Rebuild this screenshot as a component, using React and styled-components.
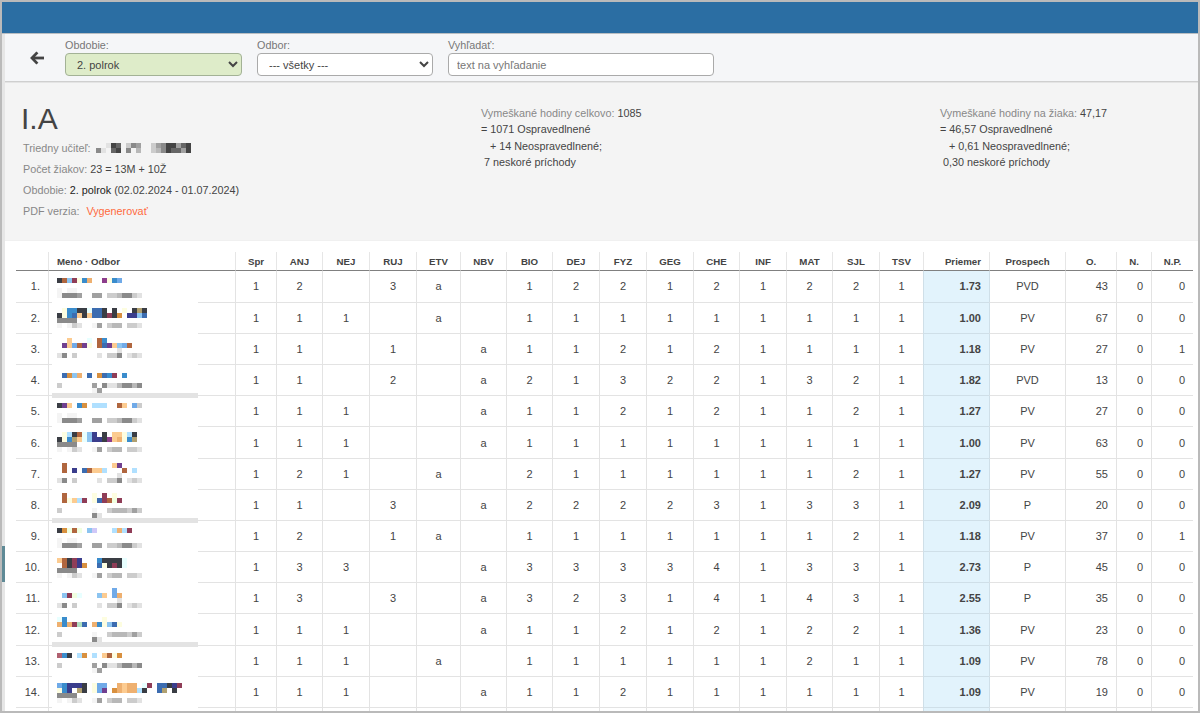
import React from "react";
import styled, { createGlobalStyle } from "styled-components";

const GlobalStyle = createGlobalStyle`
  html, body {
    margin: 0;
    padding: 0;
    background: #fff;
  }
  body {
    font-family: "Liberation Sans", Arial, sans-serif;
    font-size: 11px;
    color: #444;
  }
`;

const Frame = styled.div`
  width: 1200px;
  height: 713px;
  box-sizing: border-box;
  border: 2px solid #bababa;
  overflow: hidden;
  display: flex;
  flex-direction: column;
  background: #fff;
`;

const TopBar = styled.div`
  height: 32px;
  flex: none;
  box-sizing: border-box;
  background: #2b6ea3;
  border-bottom: 1px solid #b9bec2;
`;

const Body = styled.div`
  flex: 1;
  min-height: 0;
  display: flex;
`;

const Rail = styled.div`
  width: 3px;
  flex: none;
  background: #e6e6e6;
`;

const RailThumb = styled.div`
  margin-top: 512px;
  height: 36px;
  background: #5f8a96;
`;

const Main = styled.div`
  flex: 1;
  min-width: 0;
  display: flex;
  flex-direction: column;
`;

const Toolbar = styled.div`
  height: 47px;
  flex: none;
  display: flex;
  align-items: flex-start;
  gap: 15px;
  padding-left: 60px;
  position: relative;
  background: #f5f6f8;
  border-bottom: 1px solid #cfcfcf;
  box-shadow: 0 1px 0 #e4e4e4;
`;

const BackButton = styled.a`
  position: absolute;
  left: 25px;
  top: 17px;
  color: #444;
  line-height: 0;
`;

const Field = styled.label`
  display: flex;
  flex-direction: column;
  gap: 2px;
  padding-top: 5px;
  width: ${(props) => props.$width}px;
`;

const FieldLabel = styled.span`
  font-size: 10.8px;
  line-height: 12px;
  color: #777;
`;

const Select = styled.select`
  height: 23px;
  width: 100%;
  box-sizing: border-box;
  padding: 0 0 0 7px;
  font-family: "Liberation Sans", Arial, sans-serif;
  font-size: 11px;
  color: #444;
  border: 1px solid ${(props) => (props.$active ? "#a3b296" : "#aaa")};
  border-radius: 4px;
  background-color: ${(props) => (props.$active ? "#deecc9" : "#fff")};
`;

const SearchInput = styled.input`
  height: 23px;
  width: 100%;
  box-sizing: border-box;
  padding: 0 8px;
  font-family: "Liberation Sans", Arial, sans-serif;
  font-size: 11px;
  color: #444;
  border: 1px solid #aaa;
  border-radius: 4px;
  background: #fff;

  &::placeholder {
    color: #777;
    opacity: 1;
  }
`;

const Info = styled.section`
  height: 158px;
  flex: none;
  box-sizing: border-box;
  padding: 23px 0 0 18px;
  display: grid;
  grid-template-columns: 458px 459px 1fr;
  background: #f4f4f4;
  font-size: 10.8px;
`;

const ClassName = styled.h1`
  margin: 0 0 0 -2px;
  font-size: 30px;
  font-weight: 400;
  line-height: 28px;
  color: #444;
`;

const ClassMeta = styled.div`
  margin-top: 4px;
`;

const MetaRow = styled.div`
  display: flex;
  align-items: center;
  height: 21.2px;
  color: #888;
`;

const MetaValue = styled.span`
  color: #444;
  margin-left: 3px;
`;

const MetaStrong = styled.span`
  color: #222;
`;

const PdfLink = styled.a`
  color: #ff6a3d;
  margin-left: 7px;
`;

const Summary = styled.div`
  line-height: 16.3px;
  color: #444;
`;

const SummaryLabel = styled.span`
  color: #888;
`;

const TablePanel = styled.div`
  flex: 1;
  min-height: 0;
  padding: 11px 0 0 11px;
  background: #fff;
  border-top: 1px solid #f0f0f0;
  overflow: hidden;
`;

const Grades = styled.table`
  table-layout: fixed;
  width: 1177px;
  border-collapse: separate;
  border-spacing: 0;
`;

const Head = styled.th`
  height: 18px;
  padding: 0 8px;
  box-sizing: content-box;
  font-size: 9.7px;
  font-weight: 700;
  color: #444;
  overflow: hidden;
  white-space: nowrap;
  text-align: ${(props) => props.$align || "center"};
  border-bottom: 1px solid #808080;
  border-left: ${(props) => (props.$first ? "none" : "1px solid #e6e6e6")};
`;

const Row = styled.tr`
  height: ${(props) => (props.$first ? 31.87 : 31.17)}px;
`;

const Cell = styled.td`
  padding: 0 8px;
  color: #444;
  white-space: nowrap;
  text-align: ${(props) => props.$align || "center"};
  border-bottom: 1px solid #e3e3e3;
  border-left: ${(props) => (props.$first ? "none" : "1px solid #e3e3e3")};
`;

const AverageCell = styled(Cell)`
  background: #e2f3fc;
  font-weight: 700;
  border-bottom-color: #cfdfe8;
  border-left-color: #cfdfe8;
`;

const ResultCell = styled(Cell)`
  border-left-color: #cfdfe8;
`;

const NameCell = styled(Cell)`
  position: relative;
`;

const NameCover = styled.div`
  position: absolute;
  left: 3px;
  top: 0;
  bottom: -1px;
  width: 146px;
  padding-left: 5px;
  box-sizing: border-box;
  background: #fff;
`;

const NameRule = styled.div`
  position: absolute;
  z-index: 1;
  left: 0;
  right: 0;
  top: 28px;
  height: 5px;
  background: #e3e3e3;
`;

const MosaicSvg = styled.svg`
  display: block;
  margin-top: ${(props) => props.$top || 0}px;
`;

const TeacherMosaic = styled(MosaicSvg)`
  margin-left: 5px;
`;

const palette = {
  d: "#3a3d44", b: "#b0663f", s: "#8cc4f0", r: "#8f3d57", y: "#fdfde0",
  u: "#3a8ccc", o: "#eeb070", p: "#8c3d8c", l: "#70aae8", n: "#3a3d8c",
  k: "#3c6cb0", m: "#d8903f", q: "#fccb90", c: "#b0e0ff", i: "#e8ffff",
  v: "#704090", g: "#f0ffe0", t: "#b0a070", h: "#b0e0c0", w: "#d0c8f8",
  x: "#b06070",
  1: "#f4f4f4", 2: "#e2e2e2", 3: "#cccccc", 4: "#b8b8b8", 5: "#a0a0a0",
  6: "#8a8a8a", 7: "#666666", 8: "#444444",
};

// pixelated (anonymised) names, one string per 5px line
const Mosaic = ({ lines, top, as: Svg = MosaicSvg }) => {
  const width = Math.max(...lines.map((l) => l.length)) * 5;
  return (
    <Svg $top={top} width={width} height={lines.length * 5} shapeRendering="crispEdges">
      {lines.map((line, y) =>
        line.split("").map((ch, x) =>
          ch === "." ? null : (
            <rect key={`${x}-${y}`} x={x * 5} y={y * 5} width="5" height="5" fill={palette[ch]} />
          )
        )
      )}
    </Svg>
  );
};

const BackArrow = () => (
  <svg width="14" height="14" viewBox="0 0 14 14" fill="none" stroke="currentColor" strokeWidth="2.8">
    <path d="M7.4 1.4 L2 7 L7.4 12.6" />
    <path d="M2.4 7 H14" />
  </svg>
);

const odborA = ["", "1.11", "16665..55.3346632"];
const odborB = ["6666", "1.132..15.344.332"];
const odborC = ["............2", "26.3....2.336.232"];
const odborD = ["", "3......5.62246646", ".......15"];
const odborE = ["", "3......1..3444353", ".......62"];

const students = [
  { top: 7, name: ["dbsryuo..pyul", ...odborA], marks: "1 2 _ 3 a _ 1 2 2 1 2 1 2 2 1", avg: "1.73", res: "PVD", o: 43, n: 0, np: 0 },
  { top: 5, name: [".yuuddikkd.d.y.dtd", "dyukqdqkkdrdm.nnsk", ...odborB], marks: "1 1 1 _ a _ 1 1 1 1 1 1 1 1 1", avg: "1.00", res: "PV", o: 67, n: 0, np: 0 },
  { top: 4, name: ["..q...i.bu", ".vqlbvy.bkvqslb", ...odborC], marks: "1 1 _ 1 _ a 1 1 2 1 2 1 1 1 1", avg: "1.18", res: "PV", o: 27, n: 0, np: 1 },
  { top: 8, rule: true, name: [".kmso.k.mkur.u", ...odborD], marks: "1 1 _ 2 _ a 2 1 3 2 2 1 3 2 1", avg: "1.82", res: "PVD", o: 13, n: 0, np: 0 },
  { top: 7, name: ["dvq.um.ccc..bq.l3", ...odborA], marks: "1 1 1 _ _ a 1 1 2 1 2 1 1 2 1", avg: "1.27", res: "PV", o: 27, n: 0, np: 0 },
  { top: 5, name: [".ycdbisn.d.qqycd", "dyutqisnndpqoyut", ...odborB], marks: "1 1 1 _ _ a 1 1 1 1 1 1 1 1 1", avg: "1.00", res: "PV", o: 63, n: 0, np: 0 },
  { top: 4, name: [".b.........qv", ".b.n.kbqqc...b.c", ...odborC], marks: "1 2 1 _ a _ 2 1 1 1 1 1 1 2 1", avg: "1.27", res: "PV", o: 55, n: 0, np: 0 },
  { top: 3, rule: true, name: [".b.....y.r.y", ".byqcr.ykrbgr", ...odborE], marks: "1 1 _ 3 _ a 2 2 2 2 3 1 3 3 1", avg: "2.09", res: "P", o: 20, n: 0, np: 0 },
  { top: 7, name: ["dmgbg.sw...cocr", ...odborA], marks: "1 2 _ 1 a _ 1 1 1 1 1 1 1 2 1", avg: "1.18", res: "PV", o: 37, n: 0, np: 1 },
  { top: 6, name: ["qbdrn...uddddi", ".bdrnm..kydrdi", ...odborB], marks: "1 3 3 _ _ a 3 3 3 3 4 1 3 3 1", avg: "2.73", res: "P", o: 45, n: 0, np: 0 },
  { top: 5, name: ["...........l", ".srgi...sq.lo", ...odborC], marks: "1 3 _ 3 _ a 3 2 3 1 4 1 4 3 1", avg: "2.55", res: "P", o: 35, n: 0, np: 0 },
  { top: 3, rule: true, name: ["iu.......y", "ouorhk.ouysky", ...odborE], marks: "1 1 1 _ _ a 1 1 2 1 2 1 2 2 1", avg: "1.36", res: "PV", o: 23, n: 0, np: 0 },
  { top: 7, name: ["xud.cm.c.qbym", ...odborD], marks: "1 1 1 _ a _ 1 1 1 1 1 1 2 1 1", avg: "1.09", res: "PV", o: 78, n: 0, np: 0 },
  { top: 6, name: ["lunnnd.yll..oqoo.ir.kkdnr", "yun.td.ylv.moqoocd..kt.d", ...odborB], marks: "1 1 1 _ _ a 1 1 2 1 1 1 1 1 1", avg: "1.09", res: "PV", o: 19, n: 0, np: 0 },
];

const subjects = [
  ["Spr", 41], ["ANJ", 46], ["NEJ", 47], ["RUJ", 47], ["ETV", 44], ["NBV", 46], ["BIO", 46], ["DEJ", 47],
  ["FYZ", 47], ["GEG", 47], ["CHE", 46], ["INF", 47], ["MAT", 46], ["SJL", 47], ["TSV", 44],
];

const teacherMosaic = ["..287.365..35688578", "62178.6.4..34687758"];

const App = () => (
  <>
    <GlobalStyle />
    <Frame>
      <TopBar />
      <Body>
        <Rail>
          <RailThumb />
        </Rail>
        <Main>
          <Toolbar>
            <BackButton>
              <BackArrow />
            </BackButton>
            <Field $width={177}>
              <FieldLabel>Obdobie:</FieldLabel>
              <Select $active defaultValue="2">
                <option value="1">1. polrok</option>
                <option value="2">2. polrok</option>
              </Select>
            </Field>
            <Field $width={176}>
              <FieldLabel>Odbor:</FieldLabel>
              <Select defaultValue="all">
                <option value="all">--- všetky ---</option>
              </Select>
            </Field>
            <Field $width={266}>
              <FieldLabel>Vyhľadať:</FieldLabel>
              <SearchInput placeholder="text na vyhľadanie" />
            </Field>
          </Toolbar>

          <Info>
            <div>
              <ClassName>I.A</ClassName>
              <ClassMeta>
                <MetaRow>
                  Triedny učiteľ:
                  <Mosaic lines={teacherMosaic} as={TeacherMosaic} />
                </MetaRow>
                <MetaRow>
                  Počet žiakov:<MetaValue>23 = 13M + 10Ž</MetaValue>
                </MetaRow>
                <MetaRow>
                  Obdobie:
                  <MetaValue>
                    <MetaStrong>2. polrok</MetaStrong> (02.02.2024 - 01.07.2024)
                  </MetaValue>
                </MetaRow>
                <MetaRow>
                  PDF verzia:<PdfLink>Vygenerovať</PdfLink>
                </MetaRow>
              </ClassMeta>
            </div>
            <Summary>
              <SummaryLabel>Vymeškané hodiny celkovo:</SummaryLabel> 1085
              <br />= 1071 Ospravedlnené
              <br />
              {"\u00A0\u00A0\u00A0"}+ 14 Neospravedlnené;
              <br />
              {"\u00A0"}7 neskoré príchody
            </Summary>
            <Summary>
              <SummaryLabel>Vymeškané hodiny na žiaka:</SummaryLabel> 47,17
              <br />= 46,57 Ospravedlnené
              <br />
              {"\u00A0\u00A0\u00A0"}+ 0,61 Neospravedlnené;
              <br />
              {"\u00A0"}0,30 neskoré príchody
            </Summary>
          </Info>

          <TablePanel>
            <Grades>
              <colgroup>
                <col width="32" />
                <col width="187" />
                {subjects.map(([name, w]) => (
                  <col key={name} width={w} />
                ))}
                <col width="66" />
                <col width="76" />
                <col width="51" />
                <col width="35" />
                <col width="42" />
              </colgroup>
              <thead>
                <tr>
                  <Head $first />
                  <Head $align="left">Meno · Odbor</Head>
                  {subjects.map(([name]) => (
                    <Head key={name}>{name}</Head>
                  ))}
                  <Head $align="right">Priemer</Head>
                  <Head>Prospech</Head>
                  <Head>O.</Head>
                  <Head>N.</Head>
                  <Head>N.P.</Head>
                </tr>
              </thead>
              <tbody>
                {students.map((s, i) => (
                  <Row key={i} $first={i === 0}>
                    <Cell $first $align="right">{i + 1}.</Cell>
                    <NameCell>
                      <NameCover>
                        <Mosaic lines={s.name} top={s.top} />
                        {s.rule && <NameRule />}
                      </NameCover>
                    </NameCell>
                    {s.marks.split(" ").map((m, j) => (
                      <Cell key={j}>{m === "_" ? "" : m}</Cell>
                    ))}
                    <AverageCell $align="right">{s.avg}</AverageCell>
                    <ResultCell>{s.res}</ResultCell>
                    <Cell $align="right">{s.o}</Cell>
                    <Cell $align="right">{s.n}</Cell>
                    <Cell $align="right">{s.np}</Cell>
                  </Row>
                ))}
                <Row>
                  <Cell $first />
                  <Cell />
                  {subjects.map(([name]) => (
                    <Cell key={name} />
                  ))}
                  <AverageCell />
                  <ResultCell />
                  <Cell />
                  <Cell />
                  <Cell />
                </Row>
              </tbody>
            </Grades>
          </TablePanel>
        </Main>
      </Body>
    </Frame>
  </>
);

export default App;
